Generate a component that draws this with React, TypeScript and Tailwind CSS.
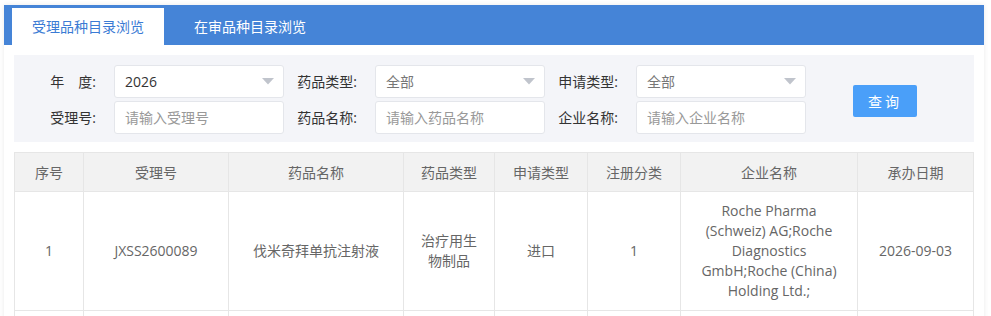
import { useState } from "react";

const font = { fontFamily: '"Microsoft YaHei", "Open Sans", "Noto Sans CJK SC", sans-serif' };

const columns = [
  { label: "序号", width: 69 },
  { label: "受理号", width: 145 },
  { label: "药品名称", width: 175 },
  { label: "药品类型", width: 91 },
  { label: "申请类型", width: 93 },
  { label: "注册分类", width: 93 },
  { label: "企业名称", width: 177 },
  { label: "承办日期", width: 116 },
];

const rows = [
  [
    "1",
    "JXSS2600089",
    "伐米奇拜单抗注射液",
    "治疗用生物制品",
    "进口",
    "1",
    "Roche Pharma (Schweiz) AG;Roche Diagnostics GmbH;Roche (China) Holding Ltd.;",
    "2026-09-03",
  ],
  ["2", "", "", "", "", "", "", ""],
];

const Arrow = () => (
  <svg width="12" height="7" viewBox="0 0 12 7" className="shrink-0">
    <path d="M0 0 L12 0 L6 6.5 Z" fill="#c0c4cc" />
  </svg>
);

const SelectBox = ({ value }: { value: string }) => (
  <div className="flex h-[33px] w-[170px] items-center justify-between rounded-[3px] border border-[#e4e6eb] bg-white pl-[10px] pr-[9px]">
    <span className={value === "2026" ? "text-[#333]" : "text-[#777]"}>{value}</span>
    <Arrow />
  </div>
);

const TextBox = ({ placeholder }: { placeholder: string }) => (
  <input
    placeholder={placeholder}
    className="h-[33px] w-[170px] rounded-[3px] border border-[#e4e6eb] bg-white px-[10px] text-[14px] text-[#333] outline-none placeholder:text-[#999]"
    style={font}
  />
);

const Label = ({ children }: { children: React.ReactNode }) => (
  <label className="mr-[18px] w-[62px] shrink-0 whitespace-nowrap text-right text-[14px] text-[#333]">
    {children}
  </label>
);

export default function App() {
  const [tab, setTab] = useState(0);
  const tabs = ["受理品种目录浏览", "在审品种目录浏览"];

  return (
    <div className="min-h-[316px] bg-white pl-[4px] pt-[5px]" style={font}>
      <div className="w-[980px] bg-white shadow-[0_0_5px_rgba(0,0,0,0.09)]">
        <div className="flex h-[40px] items-end bg-[#4584d7] pl-[8px]">
          {tabs.map((t, i) => (
            <button
              key={t}
              onClick={() => setTab(i)}
              className={
                i === tab
                  ? "h-[37px] w-[152px] bg-white text-[14px] text-[#3b7bd4]"
                  : "ml-[10px] h-[37px] w-[152px] text-[14px] text-white"
              }
            >
              {t}
            </button>
          ))}
        </div>

        <div className="px-[10px] pb-[6px] pt-[10px]">
          <div className="flex items-center bg-[#f4f5f9] pb-[8px] pl-[20px] pt-[10px] text-[14px]">
            <div className="flex flex-col gap-[3px]">
              <div className="flex items-center">
                <Label>年　度:</Label>
                <SelectBox value="2026" />
                <div className="ml-[11px]" />
                <Label>药品类型:</Label>
                <SelectBox value="全部" />
                <div className="ml-[11px]" />
                <Label>申请类型:</Label>
                <SelectBox value="全部" />
              </div>
              <div className="flex items-center">
                <Label>受理号:</Label>
                <TextBox placeholder="请输入受理号" />
                <div className="ml-[11px]" />
                <Label>药品名称:</Label>
                <TextBox placeholder="请输入药品名称" />
                <div className="ml-[11px]" />
                <Label>企业名称:</Label>
                <TextBox placeholder="请输入企业名称" />
              </div>
            </div>
            <button className="ml-[47px] mt-[3px] h-[32px] w-[64px] rounded-[2px] bg-[#4a9ff9] text-[14px] tracking-[3px] text-white">
              查询
            </button>
          </div>

          <table className="mt-[10px] w-[959px] table-fixed border-collapse text-[14px] text-[#666]">
            <colgroup>
              {columns.map((c) => (
                <col key={c.label} style={{ width: c.width }} />
              ))}
            </colgroup>
            <thead>
              <tr className="h-[39px] bg-[#f2f2f2]">
                {columns.map((c) => (
                  <th key={c.label} className="border border-[#e6e6e6] font-normal text-[#666]">
                    {c.label}
                  </th>
                ))}
              </tr>
            </thead>
            <tbody>
              {rows.map((r, ri) => (
                <tr key={ri} className={ri === 0 ? "h-[119px]" : "h-[40px]"}>
                  {r.map((cell, ci) => (
                    <td
                      key={ci}
                      className="border border-[#e6e6e6] px-[12px] text-center align-middle leading-[20px]"
                    >
                      {ri === 0 ? cell : ""}
                    </td>
                  ))}
                </tr>
              ))}
            </tbody>
          </table>
        </div>
      </div>
    </div>
  );
}
